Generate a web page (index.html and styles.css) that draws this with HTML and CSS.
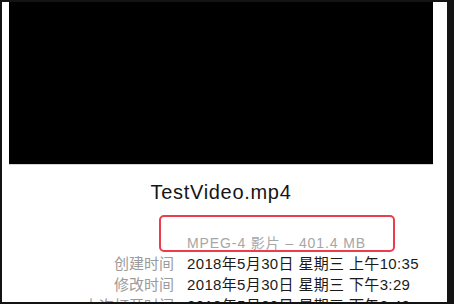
FILE: index.html
```html
<!DOCTYPE html>
<html lang="zh">
<head>
<meta charset="utf-8">
<link rel="stylesheet" href="styles.css">
</head>
<body>
<div class="panel">
  <div class="video"></div>
  <div class="title">TestVideo.mp4</div>
  <div class="info">
    <div class="kind">MPEG-4 影片 – 401.4 MB</div>
    <div class="label">创建时间</div>
    <div class="value">2018年5月30日 星期三 上午10:35</div>
    <div class="label">修改时间</div>
    <div class="value">2018年5月30日 星期三 下午3:29</div>
    <div class="label">上次打开时间</div>
    <div class="value">2018年5月30日 星期三 下午3:40</div>
  </div>
  <div class="highlight"></div>
</div>
</body>
</html>
```
FILE: styles.css
```css
html, body {
  margin: 0;
  padding: 0;
}
body {
  width: 454px;
  height: 304px;
  background: #131313;
  overflow: hidden;
  font-family: "Liberation Sans", "Noto Sans CJK SC", sans-serif;
}
.panel {
  position: relative;
  margin: 2px 7px 0 2px;
  height: 300px;
  background: #fff;
  padding: 0 14px 0 7px;
  overflow: hidden;
}
.video {
  height: 162px;
  background: #000;
  box-shadow: 0 1px 0 #d4d4d4;
}
.title {
  margin-top: 17px;
  text-align: center;
  font-size: 20px;
  line-height: 22px;
  letter-spacing: 0.7px;
  color: #151515;
}
.info {
  margin-top: 32px;
  display: grid;
  grid-template-columns: 165px 1fr;
  column-gap: 13px;
}
.kind {
  grid-column: 2;
  font-size: 14px;
  line-height: 16px;
  letter-spacing: 0.9px;
  color: #a6a6a6;
  margin-bottom: 2px;
}
.label {
  text-align: right;
  font-size: 15px;
  line-height: 21px;
  color: #9b9b9b;
}
.value {
  font-size: 15px;
  line-height: 21px;
  letter-spacing: 0.35px;
  color: #1b1b1b;
  white-space: nowrap;
}
.highlight {
  position: absolute;
  left: 157px;
  top: 213px;
  width: 232px;
  height: 33px;
  border: 2px solid #ec3d4e;
  border-radius: 5px;
}
```
